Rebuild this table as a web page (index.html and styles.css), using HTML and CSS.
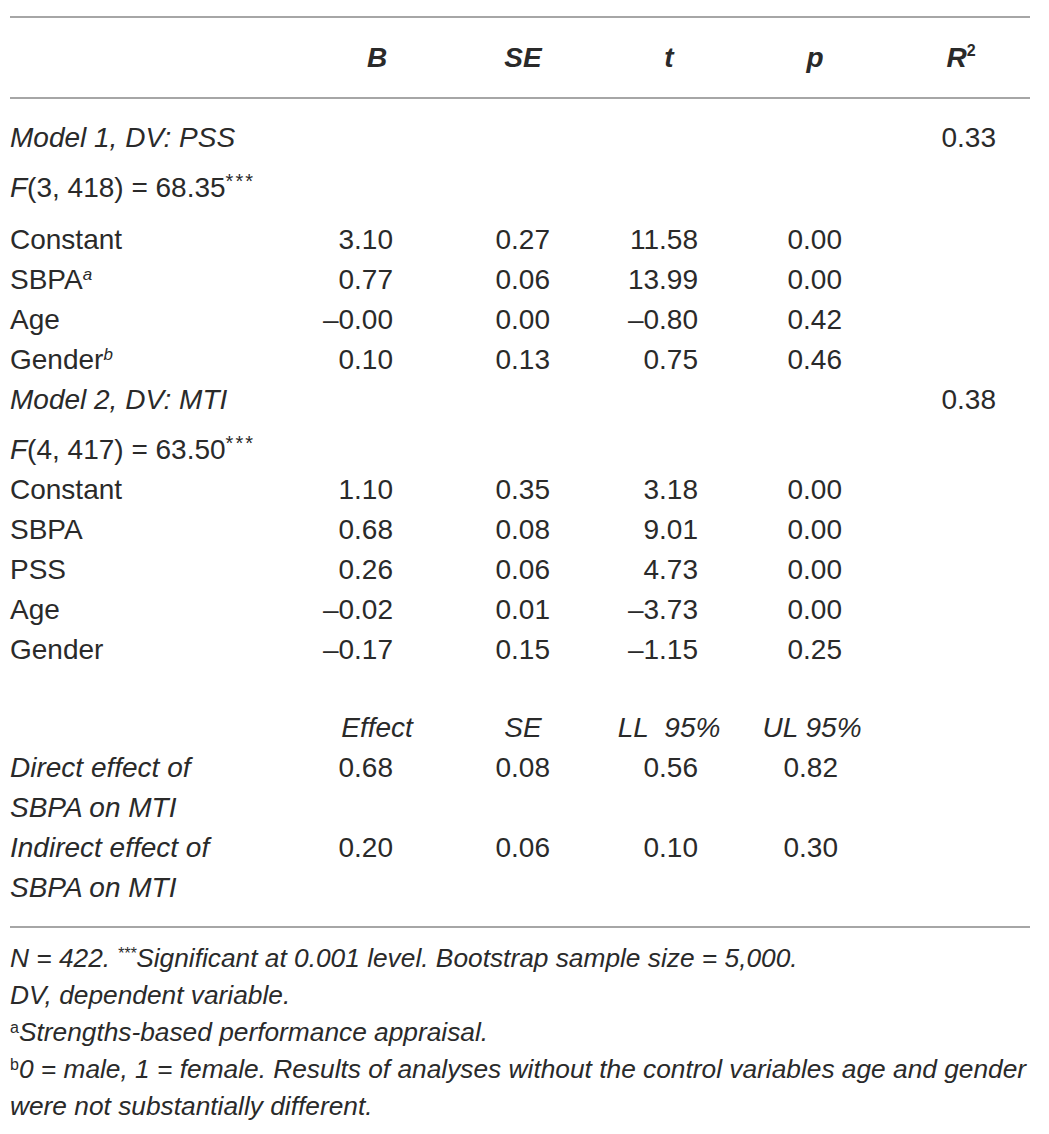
FILE: index.html
```html
<!DOCTYPE html>
<html lang="en">
<head>
<meta charset="utf-8">
<title>Regression table</title>
<link rel="stylesheet" href="styles.css">
</head>
<body>
<div class="table">
  <div class="rule rule-top"></div>
  <div class="row head">
    <div class="lab"></div>
    <div class="h">B</div>
    <div class="h">SE</div>
    <div class="h">t</div>
    <div class="h">p</div>
    <div class="h">R<sup class="hsup">2</sup></div>
  </div>
  <div class="rule"></div>

  <div class="tbody">
    <div class="row model">
      <div class="lab it">Model 1, DV: PSS</div>
      <div class="num cr">0.33</div>
    </div>
    <div class="row ftest ftest-gap">
      <div class="lab wide"><i>F</i>(3, 418) = 68.35<sup class="stars">***</sup></div>
    </div>
    <div class="row">
      <div class="lab">Constant</div>
      <div class="num cb">3.10</div><div class="num cse">0.27</div><div class="num ct">11.58</div><div class="num cp">0.00</div>
    </div>
    <div class="row">
      <div class="lab">SBPA<sup class="isup">a</sup></div>
      <div class="num cb">0.77</div><div class="num cse">0.06</div><div class="num ct">13.99</div><div class="num cp">0.00</div>
    </div>
    <div class="row">
      <div class="lab">Age</div>
      <div class="num cb">–0.00</div><div class="num cse">0.00</div><div class="num ct">–0.80</div><div class="num cp">0.42</div>
    </div>
    <div class="row">
      <div class="lab">Gender<sup class="isup">b</sup></div>
      <div class="num cb">0.10</div><div class="num cse">0.13</div><div class="num ct">0.75</div><div class="num cp">0.46</div>
    </div>
    <div class="row model">
      <div class="lab it">Model 2, DV: MTI</div>
      <div class="num cr">0.38</div>
    </div>
    <div class="row ftest">
      <div class="lab wide"><i>F</i>(4, 417) = 63.50<sup class="stars">***</sup></div>
    </div>
    <div class="row">
      <div class="lab">Constant</div>
      <div class="num cb">1.10</div><div class="num cse">0.35</div><div class="num ct">3.18</div><div class="num cp">0.00</div>
    </div>
    <div class="row">
      <div class="lab">SBPA</div>
      <div class="num cb">0.68</div><div class="num cse">0.08</div><div class="num ct">9.01</div><div class="num cp">0.00</div>
    </div>
    <div class="row">
      <div class="lab">PSS</div>
      <div class="num cb">0.26</div><div class="num cse">0.06</div><div class="num ct">4.73</div><div class="num cp">0.00</div>
    </div>
    <div class="row">
      <div class="lab">Age</div>
      <div class="num cb">–0.02</div><div class="num cse">0.01</div><div class="num ct">–3.73</div><div class="num cp">0.00</div>
    </div>
    <div class="row">
      <div class="lab">Gender</div>
      <div class="num cb">–0.17</div><div class="num cse">0.15</div><div class="num ct">–1.15</div><div class="num cp">0.25</div>
    </div>

    <div class="row effhead">
      <div class="lab"></div>
      <div class="h2">Effect</div>
      <div class="h2">SE</div>
      <div class="h2">LL&nbsp;&nbsp;95%</div>
      <div class="h2 hu">UL 95%</div>
    </div>
    <div class="row">
      <div class="lab it narrow">Direct effect of SBPA on MTI</div>
      <div class="num cb">0.68</div><div class="num cse">0.08</div><div class="num ct">0.56</div><div class="num cp cu">0.82</div>
    </div>
    <div class="row">
      <div class="lab it narrow">Indirect effect of SBPA on MTI</div>
      <div class="num cb">0.20</div><div class="num cse">0.06</div><div class="num ct">0.10</div><div class="num cp cu">0.30</div>
    </div>
  </div>
  <div class="rule rule-bottom"></div>

  <div class="notes">
    <p><i>N</i> = 422. <sup class="nstars">***</sup>Significant at 0.001 level. Bootstrap sample size = 5,000.</p>
    <p>DV, dependent variable.</p>
    <p><sup class="nsup">a</sup>Strengths-based performance appraisal.</p>
    <p><sup class="nsup">b</sup>0 = male, 1 = female. Results of analyses without the control variables age and gender were not substantially different.</p>
  </div>
</div>
</body>
</html>
```

FILE: styles.css
```css
html, body {
  margin: 0;
  padding: 0;
  background: #ffffff;
}

body {
  font-family: "Liberation Sans", Arial, Helvetica, sans-serif;
  color: #2a2a2a;
  font-size: 28px;
}

.table {
  width: 1024px;
  margin-left: 10px;
  padding-top: 16px;
}

.rule {
  height: 2px;
  width: 1020px;
  background: #a6a6a6;
}

.row {
  display: grid;
  grid-template-columns: 294px repeat(5, 146px);
  line-height: 40px;
  white-space: nowrap;
}

.head {
  padding: 20px 0 19px;
}

.h {
  text-align: center;
  font-weight: bold;
  font-style: italic;
}

.hsup {
  font-size: 16px;
  line-height: 0;
  vertical-align: 11px;
  font-style: normal;
}

.tbody {
  padding-top: 19px;
  padding-bottom: 18px;
}

.lab {
  grid-column: 1;
  white-space: nowrap;
}

.lab.wide {
  grid-column: 1 / -1;
}

.lab.narrow {
  white-space: normal;
  width: 250px;
}

.it {
  font-style: italic;
}

.model {
  margin-bottom: 10px;
}

.ftest-gap {
  margin-bottom: 12px;
}

.stars {
  font-size: 20px;
  letter-spacing: 2px;
  line-height: 0;
  vertical-align: 9px;
}

.isup {
  font-size: 17px;
  line-height: 0;
  vertical-align: 9px;
  font-style: italic;
}

.num {
  text-align: right;
}

.cb { grid-column: 2; padding-right: 57px; }
.cse { grid-column: 3; padding-right: 46px; }
.ct { grid-column: 4; padding-right: 44px; }
.cp { grid-column: 5; padding-right: 46px; }
.cp.cu { padding-right: 50px; }
.cr { grid-column: 6; padding-right: 38px; }

.effhead {
  margin-top: 38px;
}

.h2 {
  text-align: center;
  font-style: italic;
}

.h2.hu {
  padding-right: 6px;
}

.notes {
  padding-top: 12px;
  font-size: 26.3px;
  font-style: italic;
  line-height: 37px;
  width: 1020px;
}

.notes p {
  margin: 0;
}

.nstars {
  font-size: 16px;
  line-height: 0;
  vertical-align: 8px;
}

.nsup {
  font-size: 16px;
  line-height: 0;
  vertical-align: 8px;
  font-style: normal;
}
```
